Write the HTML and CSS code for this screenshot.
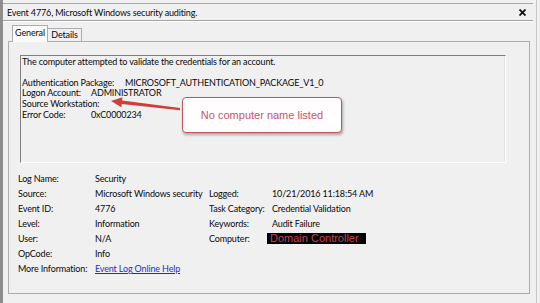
FILE: index.html
```html
<!DOCTYPE html>
<html lang="en">
<head>
    <meta charset="UTF-8">
    <title>Event 4776</title>
    <link rel="stylesheet" href="styles.css">
</head>
<body>
    <div class="window">
        <!-- Title bar -->
        <div class="titlebar">
            <span class="title">Event 4776, Microsoft Windows security auditing.</span>
            <svg class="close" width="7" height="7" viewBox="0 0 7 7">
                <path d="M0.5 0.5 L6.5 6.5 M6.5 0.5 L0.5 6.5" stroke="#111" stroke-width="1.8"/>
            </svg>
        </div>

        <!-- Tabs -->
        <div class="tabs">
            <div class="tab active">General</div>
            <div class="tab">Details</div>
        </div>

        <!-- General panel -->
        <div class="panel">
            <div class="desc">
                <p>The computer attempted to validate the credentials for an account.</p>
                <p>&nbsp;</p>
                <p><span class="k wide">Authentication Package:</span>MICROSOFT_AUTHENTICATION_PACKAGE_V1_0</p>
                <p><span class="k">Logon Account:</span>ADMINISTRATOR</p>
                <p><span class="k">Source Workstation:</span></p>
                <p><span class="k">Error Code:</span>0xC0000234</p>
            </div>

            <div class="props">
                <span>Log Name:</span><span>Security</span><span></span><span></span>
                <span>Source:</span><span>Microsoft Windows security</span><span>Logged:</span><span>10/21/2016 11:18:54 AM</span>
                <span>Event ID:</span><span>4776</span><span>Task Category:</span><span>Credential Validation</span>
                <span>Level:</span><span>Information</span><span>Keywords:</span><span>Audit Failure</span>
                <span>User:</span><span>N/A</span><span>Computer:</span><span><span class="redacted">Domain Controller</span></span>
                <span>OpCode:</span><span>Info</span><span></span><span></span>
                <span>More Information:</span><span><a href="#" class="link">Event Log Online Help</a></span><span></span><span></span>
            </div>
        </div>

        <!-- Annotation -->
        <svg class="arrow" width="540" height="303" viewBox="0 0 540 303">
            <polygon points="111,101 122.4,97.3 122.1,100.6 180.1,108 179.9,110.2 121.7,104 121.4,107.3" fill="#cf3f38"/>
        </svg>
        <div class="callout">No computer name listed</div>
    </div>
</body>
</html>
```

FILE: styles.css
```css
/* General */
body {
    margin: 0;
    background: #f0f0f0;
    font-family: 'Lato', 'Noto Sans', sans-serif;
    font-size: 9px;
    letter-spacing: -0.15px;
    color: #0a0a0a;
}

.window {
    position: relative;
    width: 537px;
    height: 303px;
    box-sizing: border-box;
    padding-top: 3px;
    border-left: 3px solid #8e8e8e;
    border-right: 1px solid #c9c9c9;
    overflow: hidden;
}

/* Title bar */
.titlebar {
    display: flex;
    align-items: center;
    height: 16px;
    margin-right: 3px;
    padding-left: 4px;
    border-top: 1px solid #a9a9a9;
    border-bottom: 1px solid #a3a3a3;
    box-shadow: 0 1px 0 #ffffff;
}

.close {
    margin-left: auto;
    margin-right: 7px;
}

/* Tabs */
.tabs {
    display: flex;
    align-items: flex-end;
    margin: 4px 0 0 9px;
    position: relative;
    z-index: 1;
}

.tab {
    height: 13px;
    width: 34px;
    box-sizing: border-box;
    border: 1px solid #adadad;
    border-left: none;
    border-bottom: none;
    text-align: center;
    line-height: 12px;
    background: #f0f0f0;
}

.tab.active {
    height: 17px;
    width: 36px;
    border-left: 1px solid #adadad;
    background: #fbfbfb;
    line-height: 14px;
    margin-bottom: -1px;
}

/* Panel */
.panel {
    margin-left: 5px;
    width: 522px;
    height: 253px;
    box-sizing: border-box;
    border: 1px solid #acacac;
}

.desc {
    margin: 13px 0 0 11px;
    width: 486px;
    height: 108px;
    box-sizing: border-box;
    padding: 0 0 0 1px;
    border-top: 1px solid #7f7f7f;
    border-left: 1px solid #7f7f7f;
    border-right: 1px solid #ffffff;
    border-bottom: 1px solid #ffffff;
    box-shadow: inset -1px 0 0 #e3e3e3;
}

.desc p {
    margin: 0;
    line-height: 10.7px;
    white-space: nowrap;
}

.desc p:first-child {
    line-height: 11px;
}

.k {
    display: inline-block;
    width: 69px;
}

.k.wide {
    width: 103px;
}

.props {
    display: grid;
    grid-template-columns: 77px 114px 63px auto;
    grid-auto-rows: 15px;
    align-items: center;
    margin: 8px 0 0 9px;
    white-space: nowrap;
}

.link {
    color: #1a2fc8;
    text-decoration: underline;
}

.redacted {
    display: inline-block;
    margin-left: -5px;
    padding: 0 7px 0 3px;
    background: #000;
    color: #c64758;
    font-family: 'Liberation Sans', Arial, sans-serif;
    font-size: 11px;
    letter-spacing: 0;
    line-height: 11px;
}

/* Annotation overlay */
.arrow {
    position: absolute;
    left: -3px;
    top: 0;
    pointer-events: none;
}

.callout {
    position: absolute;
    left: 179px;
    top: 97px;
    width: 160px;
    height: 36px;
    box-sizing: border-box;
    border: 1.5px solid #c4545a;
    border-radius: 4px;
    background: #fffdfd;
    box-shadow: 1px 2px 3px rgba(0, 0, 0, 0.3);
    color: #c8546c;
    font-family: 'Liberation Sans', Arial, sans-serif;
    font-size: 11px;
    letter-spacing: 0;
    display: flex;
    align-items: center;
    justify-content: center;
}
```
